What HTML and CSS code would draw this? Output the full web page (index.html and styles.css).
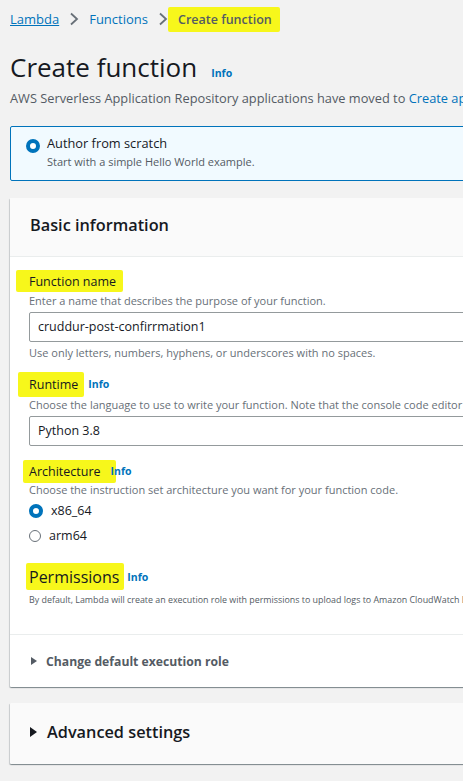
FILE: index.html
```html
<!DOCTYPE html>
<html>
<head>
<meta charset="utf-8">
<link rel="stylesheet" href="styles.css">
</head>
<body>
<div class="page">
  <nav class="crumbs">
    <a class="crumb-link">Lambda</a>
    <svg class="chev" viewBox="0 0 10 14" width="10" height="14"><path d="M2 1.5 L8 7 L2 12.5" fill="none" stroke="#687078" stroke-width="1.8"/></svg>
    <span class="crumb-plain">Functions</span>
    <svg class="chev" viewBox="0 0 10 14" width="10" height="14"><path d="M2 1.5 L8 7 L2 12.5" fill="none" stroke="#687078" stroke-width="1.8"/></svg>
    <span class="crumb-current hl">Create function</span>
  </nav>

  <header class="head">
    <div class="title-row">
      <h1 class="title">Create function</h1>
      <span class="info">Info</span>
    </div>
    <p class="subtitle">AWS Serverless Application Repository applications have moved to <span class="link">Create application</span>.</p>
  </header>

  <div class="tile">
    <span class="radio on"></span>
    <div class="tile-text">
      <div class="tile-title">Author from scratch</div>
      <div class="tile-desc">Start with a simple Hello World example.</div>
    </div>
  </div>

  <section class="card">
    <div class="card-head">Basic information</div>
    <div class="card-body">
      <div class="field f-name">
        <div class="label"><span class="hl hl-name">Function name</span></div>
        <div class="desc">Enter a name that describes the purpose of your function.</div>
        <div class="input">cruddur-post-confirrmation1</div>
        <div class="help">Use only letters, numbers, hyphens, or underscores with no spaces.</div>
      </div>
      <div class="field f-runtime">
        <div class="label"><span class="hl hl-runtime">Runtime</span><span class="info">Info</span></div>
        <div class="desc">Choose the language to use to write your function. Note that the console code editor supports only Node.js, Python, and Ruby.</div>
        <div class="input">Python 3.8</div>
      </div>
      <div class="field f-arch">
        <div class="label"><span class="hl hl-arch">Architecture</span><span class="info info-arch">Info</span></div>
        <div class="desc desc-arch">Choose the instruction set architecture you want for your function code.</div>
        <div class="options">
          <div class="opt"><span class="radio on"></span><span>x86_64</span></div>
          <div class="opt"><span class="radio"></span><span>arm64</span></div>
        </div>
      </div>
      <div class="field f-perm">
        <div class="perm-label"><span class="hl hl-perm">Permissions</span><span class="info">Info</span></div>
        <div class="perm-desc">By default, Lambda will create an execution role with permissions to upload logs to Amazon CloudWatch Logs. You can customize this default role later when adding triggers.</div>
      </div>
    </div>
    <div class="expander">
      <span class="tri"></span><span>Change default execution role</span>
    </div>
  </section>

  <section class="card adv">
    <div class="adv-head"><span class="tri big"></span><span>Advanced settings</span></div>
  </section>
</div>
</body>
</html>
```
FILE: styles.css
```css
html, body {
  margin: 0;
  padding: 0;
  overflow: hidden;
  background: #f2f2f2;
}
body {
  font-family: "Open Sans", "Noto Sans", sans-serif;
  color: #16191f;
  width: 463px;
  height: 781px;
}
.page {
  width: 900px;
  padding: 0 0 0 10px;
}
.crumbs {
  display: flex;
  align-items: center;
  height: 38px;
  font-size: 13px;
  gap: 6px;
}
.crumb-link {
  color: #0073bb;
  text-decoration: underline;
}
.crumb-plain { color: #0073bb; }
.chev { margin: 0 4px; }
.crumb-current {
  font-size: 12.5px;
  font-weight: 600;
  color: #545b64;
  margin-left: -10px;
  padding: 0 8px 0 10px;
  height: 25px;
  line-height: 25px;
}
.hl {
  background: #f7f71b;
  border-radius: 2px;
}
.head { margin-top: 12px; }
.title-row {
  display: flex;
  align-items: baseline;
  gap: 14px;
}
.title {
  margin: 0;
  font-size: 26px;
  font-weight: 400;
  line-height: 34px;
}
.info {
  color: #0073bb;
  font-size: 10.5px;
  font-weight: 700;
  position: relative;
}
.subtitle {
  margin: 5px 0 0;
  font-size: 12.8px;
  color: #545b64;
  white-space: nowrap;
}
.link { color: #0073bb; }
.tile {
  margin-top: 19px;
  height: 55px;
  border: 1px solid #0073bb;
  background: #f1faff;
  border-radius: 2px;
  display: flex;
  align-items: flex-start;
  padding: 0 0 0 15px;
  box-sizing: border-box;
}
.radio {
  width: 10px;
  height: 10px;
  border-radius: 50%;
  border: 1.5px solid #687078;
  background: #fff;
  box-sizing: content-box;
  flex: none;
  display: inline-block;
}
.radio.on {
  border: 4px solid #0073bb;
  width: 6px;
  height: 6px;
}
.tile .radio { margin-top: 12px; }
.tile-text { margin-left: 7px; padding-top: 7px; }
.tile-title { font-size: 12.8px; line-height: 18px; }
.tile-desc { font-size: 11px; line-height: 15px; color: #545b64; margin-top: 2px; }
.card {
  margin-top: 17px;
  background: #fff;
  border-radius: 1px;
  box-shadow: 0 1px 1px 0 rgba(0,28,36,.3), 1px 1px 1px 0 rgba(0,28,36,.15), -1px 1px 1px 0 rgba(0,28,36,.15);
}
.card-head {
  background: #fafafa;
  height: 59px;
  border-bottom: 1px solid #eaeded;
  padding: 0 0 4px 20px;
  display: flex;
  align-items: center;
  font-size: 16.3px;
  font-weight: 600;
  box-sizing: border-box;
}
.card-body { padding: 16px 0 0 19px; }
.label {
  font-size: 12.5px;
  line-height: 17px;
  display: flex;
  align-items: center;
  gap: 5px;
}
.hl-name { padding: 3px 7px 2px 13px; margin: -3px 0 -2px -13px; }
.hl-runtime { padding: 4px 6px 4px 11px; margin: -4px -1px -4px -11px; }
.hl-arch { padding: 3px 15px 3px 6px; margin: -3px -15px -3px -6px; }
.info-arch { margin-left: 5px; }
.hl-perm { padding: 3px 5px 2px 3px; margin: -3px -2px -2px -3px; }
.desc {
  font-size: 11px;
  line-height: 15px;
  color: #687078;
  margin-top: 3px;
  white-space: nowrap;
}
.desc-arch { margin-top: 2px; }
.help {
  font-size: 11px;
  line-height: 15px;
  color: #687078;
  margin-top: 3.5px;
  white-space: nowrap;
}
.input {
  margin-top: 3.5px;
  height: 30px;
  border: 1px solid #949a9c;
  border-radius: 2px;
  box-sizing: border-box;
  font-size: 12.5px;
  line-height: 28px;
  padding-left: 8px;
  width: 700px;
}
.f-runtime { margin-top: 16px; }
.f-runtime .desc { margin-top: 4px; }
.f-arch { margin-top: 17.5px; }
.options { margin-top: 4.5px; display: flex; flex-direction: column; gap: 7px; }
.opt { display: flex; align-items: center; gap: 8px; font-size: 12.5px; line-height: 18px; }
.f-perm { margin-top: 21.5px; padding-bottom: 28.5px; }
.perm-label {
  font-size: 16px;
  line-height: 22px;
  display: flex;
  align-items: center;
  gap: 5px;
}
.perm-desc {
  font-size: 8.9px;
  line-height: 13px;
  color: #545b64;
  margin-top: 4.5px;
  white-space: nowrap;
}
.expander {
  border-top: 1px solid #eaeded;
  height: 53px;
  display: flex;
  align-items: center;
  padding-left: 21px;
  gap: 9px;
  font-size: 12.2px;
  font-weight: 700;
  color: #545b64;
  box-sizing: border-box;
}
.tri {
  width: 0; height: 0;
  border-left: 6px solid #545b64;
  border-top: 4px solid transparent;
  border-bottom: 4px solid transparent;
}
.tri.big { border-left-color: #16191f; border-left-width: 7px; border-top-width: 5px; border-bottom-width: 5px; }
.adv { margin-top: 16px; background: #fafafa; }
.adv-head {
  height: 61px;
  display: flex;
  align-items: center;
  padding: 0 0 3px 20px;
  gap: 10px;
  font-size: 16.3px;
  font-weight: 600;
  box-sizing: border-box;
}
```
